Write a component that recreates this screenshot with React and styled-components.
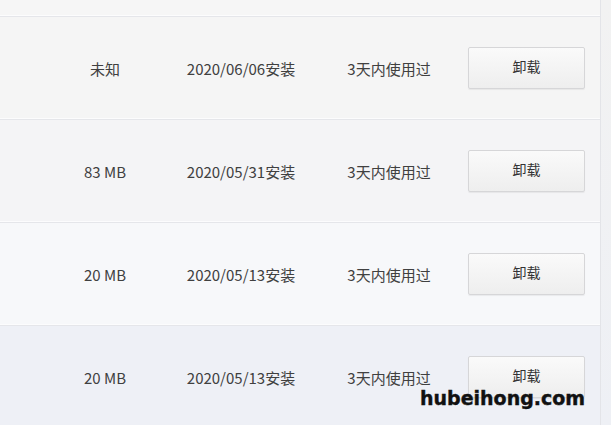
import React from 'react';
import styled, { createGlobalStyle } from 'styled-components';

const GlobalStyle = createGlobalStyle`
  html, body {
    margin: 0;
    padding: 0;
    background: #f4f5f8;
    font-family: "Noto Sans CJK SC", "Microsoft YaHei", sans-serif;
  }
`;

const Page = styled('div')`
  position: relative;
  width: 611px;
  height: 425px;
  overflow: hidden;
  display: flex;
  background: linear-gradient(#f6f6f6, #f3f4f7 60%, #eceff6);
`;

const List = styled('div')`
  width: 600px;
  display: flex;
  flex-direction: column;
  border-right: 1px solid #e3e4e8;
  box-shadow: 1px 0 0 #fbfbfc;
`;

const Strip = styled('div')`
  flex: 1;
  background: linear-gradient(#f2f2f2, #eef0f5);
`;

const Row = styled('div')`
  flex: none;
  height: ${({ h }) => h}px;
  display: flex;
  align-items: center;
  background: ${({ bg }) => bg};
  border-bottom: 1px solid #e5e6ea;
  box-shadow: inset 0 -1px 0 #fcfcfd;
  font-size: 15px;
  color: #404040;
`;

const Cell = styled('div')`
  width: ${({ w }) => w}px;
  text-align: center;
  white-space: nowrap;
`;

const Spacer = styled('div')`
  width: 55px;
`;

const Button = styled('button')`
  margin-left: 17px;
  width: 117px;
  height: 42px;
  border: 1px solid #d6d6d8;
  border-radius: 2px;
  background: linear-gradient(#fafafa, #eeeeee);
  box-shadow: 0 1px 1px rgba(0, 0, 0, 0.06);
  font-family: inherit;
  font-size: 14px;
  color: #333;
  padding: 0 0 4px;
  margin-top: -1px;
`;

const Watermark = styled('div')`
  position: absolute;
  left: 420px;
  top: 387px;
  font-family: "DejaVu Sans", sans-serif;
  font-weight: 700;
  font-size: 19px;
  letter-spacing: 0;
  color: #111;
  -webkit-text-stroke: 0.4px #111;
`;

const rows = [
  { size: '未知', date: '2020/06/06安装', bg: '#f5f5f5' },
  { size: '83 MB', date: '2020/05/31安装', bg: '#f4f4f6' },
  { size: '20 MB', date: '2020/05/13安装', bg: '#f7f8fa' },
  { size: '20 MB', date: '2020/05/13安装', bg: '#eef0f6' },
];

export default function App() {
  return (
    <Page>
      <GlobalStyle />
      <List>
        <Row h={16} bg="#f6f6f6" />
        {rows.map((r, i) => (
          <Row key={i} h={102} bg={r.bg}>
            <Spacer />
            <Cell w={100}>{r.size}</Cell>
            <Cell w={172}>{r.date}</Cell>
            <Cell w={124}>3天内使用过</Cell>
            <Button>卸载</Button>
          </Row>
        ))}
      </List>
      <Strip />
      <Watermark>hubeihong.com</Watermark>
    </Page>
  );
}
